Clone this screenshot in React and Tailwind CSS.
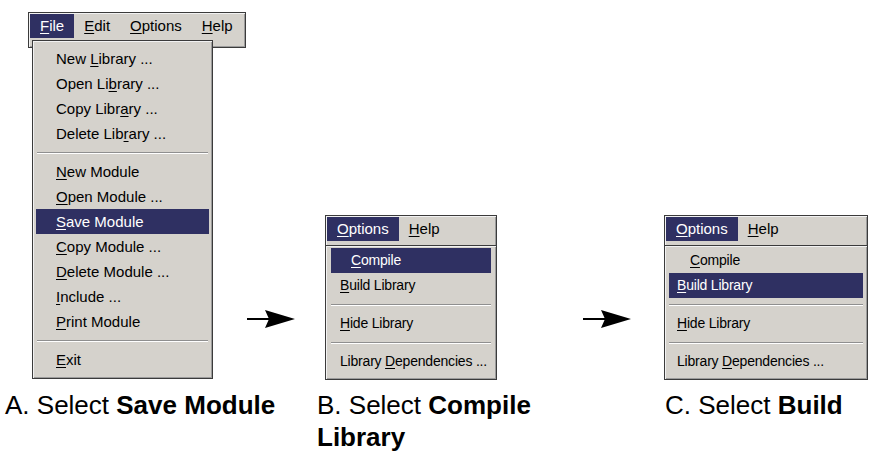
const menuFont = { fontFamily: '"Liberation Sans", Arial, sans-serif' };

const U = ({ children }) => (
  <span className="underline decoration-1 underline-offset-[2px]">{children}</span>
);

const Bar = ({ items, active, width }) => (
  <div
    className={`${width} h-[36px] bg-[#d5d2cc] border border-[#3b3b3b] shadow-[inset_1px_1px_0_#f2f2f2,inset_-1px_-1px_0_#9c9c9c] pl-[1px] pt-[1px] flex items-start`}
  >
    {items.map((it, i) => (
      <div
        key={i}
        className={`h-[24px] leading-[24px] px-[10px] text-[15px] ${
          i === active ? "bg-[#2f3062] text-white" : "text-black"
        }`}
      >
        {it}
      </div>
    ))}
  </div>
);

const Sep = ({ inset }) => (
  <div className={`h-[13px] flex items-center ${inset}`}>
    <div className="h-[2px] w-full border-t border-t-[#8f8f8f] border-b border-b-white" />
  </div>
);

const Item = ({ children, active, pad, size = "text-[15px]" }) => (
  <div
    className={`h-[25px] leading-[25px] whitespace-nowrap ${size} ${pad} ${
      active ? "bg-[#2f3062] text-white" : "text-black"
    }`}
  >
    {children}
  </div>
);

const Drop = ({ className, children }) => (
  <div
    className={`relative bg-[#d5d2cc] border border-[#3b3b3b] shadow-[inset_1px_1px_0_#f2f2f2,inset_-1px_-1px_0_#9c9c9c] ${className}`}
  >
    {children}
  </div>
);

const Arrow = () => (
  <svg width="48" height="18" viewBox="0 0 48 18">
    <line x1="0" y1="9" x2="22" y2="9" stroke="#000" strokeWidth="2" />
    <path d="M18 0 L48 9 L18 18 L22 9 Z" fill="#000" />
  </svg>
);

const barItems = [
  <>
    <U>O</U>ptions
  </>,
  <>
    <U>H</U>elp
  </>,
];

const sm = "text-[14px] tracking-[-0.2px]";

export default function App() {
  return (
    <div className="w-[883px] h-[455px] bg-white overflow-hidden" style={menuFont}>
      <div className="flex items-start h-[384px]">
        {/* A */}
        <div className="ml-[28px] mt-[12px] w-[218px]">
          <Bar
            width="w-[218px]"
            active={0}
            items={[
              <>
                <U>F</U>ile
              </>,
              <>
                <U>E</U>dit
              </>,
              <>
                <U>O</U>ptions
              </>,
              <>
                <U>H</U>elp
              </>,
            ]}
          />
          <Drop className="w-[181px] ml-[4px] mt-[-8px] px-[3px] pt-[5px] pb-[6px]">
            <Item pad="pl-[20px]">
              New <U>L</U>ibrary ...
            </Item>
            <Item pad="pl-[20px]">
              Open Li<U>b</U>rary ...
            </Item>
            <Item pad="pl-[20px]">
              Copy Libr<U>a</U>ry ...
            </Item>
            <Item pad="pl-[20px]">
              Delete Lib<U>r</U>ary ...
            </Item>
            <Sep inset="px-[1px]" />
            <Item pad="pl-[20px]">
              <U>N</U>ew Module
            </Item>
            <Item pad="pl-[20px]">
              <U>O</U>pen Module ...
            </Item>
            <Item pad="pl-[20px]" active>
              <U>S</U>ave Module
            </Item>
            <Item pad="pl-[20px]">
              <U>C</U>opy Module ...
            </Item>
            <Item pad="pl-[20px]">
              <U>D</U>elete Module ...
            </Item>
            <Item pad="pl-[20px]">
              <U>I</U>nclude ...
            </Item>
            <Item pad="pl-[20px]">
              <U>P</U>rint Module
            </Item>
            <Sep inset="px-[1px]" />
            <Item pad="pl-[20px]">
              <U>E</U>xit
            </Item>
          </Drop>
        </div>

        <div className="mt-[310px] ml-[1px]">
          <Arrow />
        </div>

        {/* B */}
        <div className="ml-[30px] mt-[215px] w-[172px]">
          <Bar width="w-[172px]" active={0} items={barItems} />
          <Drop className="w-[172px] mt-[-6px] px-[5px] pt-[2px] pb-[5px]">
            <Item pad="pl-[20px]" size={sm} active>
              <U>C</U>ompile
            </Item>
            <Item pad="pl-[9px]" size={sm}>
              <U>B</U>uild Library
            </Item>
            <Sep inset="px-0" />
            <Item pad="pl-[9px]" size={sm}>
              <U>H</U>ide Library
            </Item>
            <Sep inset="px-0" />
            <Item pad="pl-[9px]" size={sm}>
              Library <U>D</U>ependencies ...
            </Item>
          </Drop>
        </div>

        <div className="mt-[310px] ml-[86px]">
          <Arrow />
        </div>

        {/* C */}
        <div className="ml-[33px] mt-[215px] w-[204px]">
          <Bar width="w-[204px]" active={0} items={barItems} />
          <Drop className="w-[204px] mt-[-6px] px-[4px] pt-[2px] pb-[5px]">
            <Item pad="pl-[21px]" size={sm}>
              <U>C</U>ompile
            </Item>
            <Item pad="pl-[8px]" size={sm} active>
              <U>B</U>uild Library
            </Item>
            <Sep inset="px-0" />
            <Item pad="pl-[8px]" size={sm}>
              <U>H</U>ide Library
            </Item>
            <Sep inset="px-0" />
            <Item pad="pl-[8px]" size={sm}>
              Library <U>D</U>ependencies ...
            </Item>
          </Drop>
        </div>
      </div>

      <div
        className="mt-[5px] flex items-start text-[26px] leading-[32px] text-black"
        style={{ fontFamily: '"Liberation Sans", Arial, sans-serif' }}
      >
        <div className="ml-[5px] w-[312px]">
          A. Select <b>Save Module</b>
        </div>
        <div className="w-[348px]">
          B. Select <b>Compile</b>
          <br />
          <b>Library</b>
        </div>
        <div>
          C. Select <b>Build</b>
        </div>
      </div>
    </div>
  );
}
